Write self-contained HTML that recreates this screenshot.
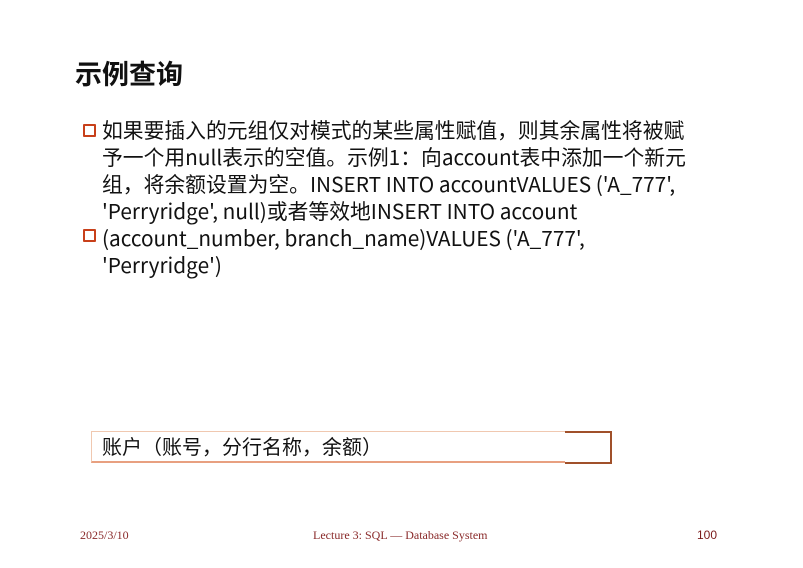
<!DOCTYPE html>
<html><head><meta charset="utf-8"><style>
body{margin:0;width:803px;height:568px;background:#fff;position:relative;overflow:hidden;font-family:"Noto Sans CJK SC",sans-serif;}
.t{position:absolute;left:75px;top:53px;font-size:27px;font-weight:bold;color:#111;}
.b{position:absolute;left:102px;top:116px;font-size:20.8px;line-height:27px;color:#111;white-space:nowrap;}
.sq{position:absolute;width:9px;height:9px;border:2px solid #c8401a;border-radius:1px;background:#fff;}
.box{position:absolute;left:91px;top:431px;width:474px;height:32px;border:1px solid #f0c8b0;border-bottom:2px solid #e8a080;border-right:none;font-size:20px;line-height:28px;padding-left:10px;box-sizing:border-box;color:#111}
.box2{position:absolute;left:565px;top:431px;width:47px;height:33px;border:2px solid #a0502a;border-left:none;box-sizing:border-box;}
.f{position:absolute;top:528px;font-size:12px;color:#8a2a2a;font-family:"Liberation Serif",serif;}
</style></head><body>
<div class="t">示例查询</div>
<div class="sq" style="left:83px;top:124px"></div>
<div class="sq" style="left:83px;top:229px"></div>
<div class="b">如果要插入的元组仅对模式的某些属性赋值，则其余属性将被赋<br>予一个用null表示的空值。示例1：向account表中添加一个新元<br>组，将余额设置为空。INSERT INTO accountVALUES ('A_777',<br>'Perryridge', null)或者等效地INSERT INTO account<br>(account_number, branch_name)VALUES ('A_777',<br>'Perryridge')</div>
<div class="box">账户（账号，分行名称，余额）</div>
<div class="box2"></div>
<div class="f" style="left:80px">2025/3/10</div>
<div class="f" style="left:313px">Lecture 3: SQL — Database System</div>
<div class="f" style="left:697px;font-family:'Liberation Sans',sans-serif;color:#7a1a1a">100</div>
</body></html>
